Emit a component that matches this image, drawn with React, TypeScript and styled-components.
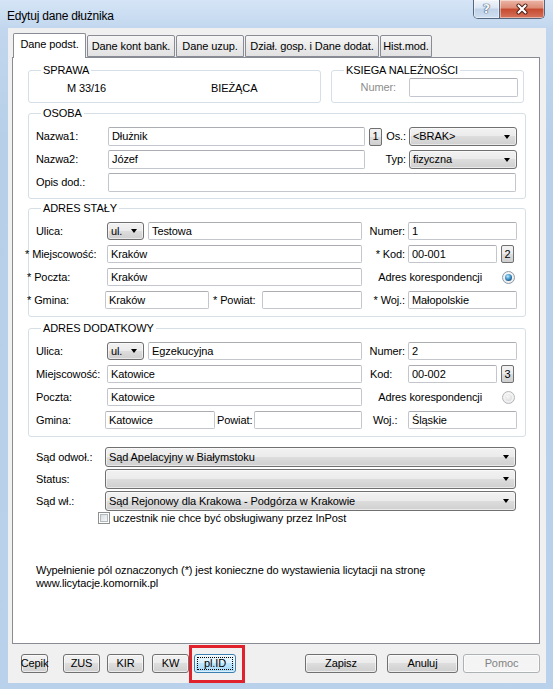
import React from "react";
import styled, { createGlobalStyle } from "styled-components";

const FONT = `"Liberation Sans", Arial, sans-serif`;

const GlobalStyle = createGlobalStyle`
  html, body { margin: 0; padding: 0; background: #ffffff; }
  body { font-family: ${FONT}; font-size: 11px; color: #000; }
  *, *::before, *::after { box-sizing: border-box; }
`;

const Window = styled.div`
  width: 553px;
  height: 689px;
  display: flex;
  flex-direction: column;
  padding: 0 7px 6px 8px;
  background: linear-gradient(180deg, #d5e5f6 0px, #c2d7ee 28px, #b7cfe9 140px, #b9d1ea 100%);
  font-family: ${FONT};
  font-size: 11px;
  letter-spacing: -0.1px;
  overflow: hidden;
`;

const TitleBar = styled.div`
  flex: none;
  height: 28px;
  display: flex;
  align-items: flex-start;
`;

const TitleText = styled.div`
  margin: 9px 0 0 -1px;
  font-size: 12px;
  line-height: 14px;
  letter-spacing: -0.2px;
  color: #000;
`;

const CaptionGroup = styled.div`
  margin-left: auto;
  margin-right: 1px;
  display: flex;
  height: 19px;
  border: 1px solid #55677d;
  border-top: none;
  border-radius: 0 0 5px 5px;
  overflow: hidden;
`;

const CaptionBtn = styled.div<{ $kind: "help" | "close" }>`
  height: 100%;
  width: ${(p) => (p.$kind === "help" ? 25 : 45)}px;
  display: flex;
  align-items: center;
  justify-content: center;
  background: ${(p) =>
    p.$kind === "help"
      ? "linear-gradient(180deg, #f1f5fb 0%, #dbe6f3 45%, #bfd1e7 50%, #cfdff1 100%)"
      : "linear-gradient(180deg, #ecb6a7 0%, #dc8b75 45%, #c54a2f 50%, #d6735b 100%)"};
  box-shadow: inset 0 0 0 1px rgba(255, 255, 255, 0.45);
  & + & {
    border-left: 1px solid #55677d;
  }
`;

const HelpGlyph = styled.span`
  font-family: "DejaVu Sans", sans-serif;
  font-size: 13px;
  font-weight: bold;
  line-height: 14px;
  color: #f3f6fa;
  text-shadow: 0 0 1px #3d5573, 0 0 1px #3d5573, 0 0 1px #3d5573;
`;

const Client = styled.div`
  flex: 1;
  display: flex;
  flex-direction: column;
  background: #f0f0f0;
  padding: 5px 6px 0 4px;
`;

const TabStrip = styled.div`
  flex: none;
  height: 24px;
  display: flex;
  align-items: flex-end;
  gap: 1px;
  padding-left: 1px;
`;

const Tab = styled.div<{ $active?: boolean; $w: number }>`
  position: relative;
  z-index: ${(p) => (p.$active ? 2 : 0)};
  width: ${(p) => p.$w}px;
  height: ${(p) => (p.$active ? 25 : 22)}px;
  margin-bottom: ${(p) => (p.$active ? -1 : 0)}px;
  padding-bottom: ${(p) => (p.$active ? 3 : 0)}px;
  border: 1px solid #898c95;
  border-bottom: ${(p) => (p.$active ? "none" : "1px solid #898c95")};
  border-radius: 2px 2px 0 0;
  background: ${(p) => (p.$active ? "#ffffff" : "linear-gradient(180deg, #f6f6f6 0%, #ebebeb 50%, #e2e2e2 100%)")};
  display: flex;
  align-items: center;
  justify-content: center;
  white-space: nowrap;
  line-height: 13px;
`;

const Panel = styled.div`
  flex: none;
  height: 587px;
  background: #ffffff;
  border: 1px solid #898c95;
  padding: 6px 13px 0 15px;
  display: flex;
  flex-direction: column;
`;

const TopRow = styled.div`
  display: flex;
  gap: 10px;
`;

const Group = styled.fieldset<{ $w?: number; $mt?: number; $pr?: number; $pt?: number; $pb?: number }>`
  margin: ${(p) => p.$mt ?? 0}px 0 0 0;
  padding: ${(p) => p.$pt ?? 7}px ${(p) => p.$pr ?? 8}px ${(p) => p.$pb ?? 7}px 7px;
  border: 1px solid #d5dfe5;
  border-radius: 3px;
  min-width: 0;
  flex: none;
  ${(p) => (p.$w ? `width: ${p.$w}px;` : "")}
`;

const Legend = styled.legend`
  padding: 0 2px;
  margin-left: 5px;
  font-size: 11px;
  line-height: 13px;
  color: #000;
`;

const SprawaRow = styled.div`
  height: 19px;
  display: grid;
  grid-template-columns: 144px auto;
  align-items: center;
  padding-left: 31px;
`;

const KsiegaRow = styled.div`
  height: 19px;
  display: flex;
  align-items: center;
  justify-content: flex-end;
  gap: 13px;
`;

const Rows = styled.div<{ $gap: number }>`
  display: flex;
  flex-direction: column;
  gap: ${(p) => p.$gap}px;
`;

const FlexRow = styled.div<{ $h: number }>`
  height: ${(p) => p.$h}px;
  display: flex;
  align-items: center;
`;

const AddrRow = styled.div`
  height: 18px;
  display: grid;
  grid-template-columns: 71px 255px 46px 109px;
  align-items: center;
`;

const Cell = styled.div<{ $span?: string; $end?: boolean }>`
  display: flex;
  align-items: center;
  height: 100%;
  min-width: 0;
  ${(p) => (p.$span ? `grid-column: ${p.$span};` : "")}
  ${(p) => (p.$end ? "justify-content: flex-end; gap: 20px; padding-right: 2px;" : "")}
`;

const Label = styled.span<{
  $w?: number;
  $align?: "left" | "right";
  $shift?: number;
  $pad?: number;
  $muted?: boolean;
  $flex?: boolean;
}>`
  flex: ${(p) => (p.$flex ? "1 1 auto" : "none")};
  ${(p) => (p.$w ? `width: ${p.$w}px;` : "")}
  text-align: ${(p) => p.$align ?? "left"};
  margin-left: ${(p) => p.$shift ?? 0}px;
  ${(p) =>
    p.$align === "right" ? `padding-right: ${p.$pad ?? 3}px;` : `padding-left: ${p.$pad ?? 0}px;`}
  color: ${(p) => (p.$muted ? "#8d8d8d" : "#000")};
  white-space: nowrap;
  line-height: 13px;
`;

const TextBox = styled.div<{ $w?: number; $ml?: number; $mr?: number; $h?: number }>`
  flex: ${(p) => (p.$w ? "none" : "1 1 0")};
  ${(p) => (p.$w ? `width: ${p.$w}px;` : "")}
  min-width: 0;
  margin-left: ${(p) => p.$ml ?? 0}px;
  margin-right: ${(p) => p.$mr ?? 0}px;
  height: ${(p) => p.$h ?? 18}px;
  border: 1px solid #c3c7cd;
  border-top-color: #abadb3;
  border-radius: 2px;
  background: #ffffff;
  padding: 0 3px;
  display: flex;
  align-items: center;
  white-space: nowrap;
  overflow: hidden;
  line-height: 13px;
`;

const Combo = styled.div<{ $w: number; $h: number; $ml?: number }>`
  position: relative;
  flex: none;
  width: ${(p) => p.$w}px;
  height: ${(p) => p.$h}px;
  margin-left: ${(p) => p.$ml ?? 0}px;
  border: 1px solid #707070;
  border-radius: 3px;
  background: linear-gradient(180deg, #f2f2f2 0%, #ebebeb 50%, #dddddd 50%, #cfcfcf 100%);
  box-shadow: inset 0 0 0 1px rgba(255, 255, 255, 0.55);
  display: flex;
  align-items: center;
  padding: 0 16px 0 3px;
  white-space: nowrap;
  overflow: hidden;
  line-height: 13px;
  &::after {
    content: "";
    position: absolute;
    right: 6px;
    top: 50%;
    margin-top: -2px;
    border-left: 3.5px solid transparent;
    border-right: 3.5px solid transparent;
    border-top: 4px solid #000;
  }
`;

const SmallBtn = styled.div<{ $ml?: number }>`
  flex: none;
  width: 13px;
  height: 18px;
  margin-left: ${(p) => p.$ml ?? 0}px;
  border: 1px solid #707070;
  border-radius: 2px;
  background: linear-gradient(180deg, #f2f2f2 0%, #ebebeb 50%, #dddddd 50%, #cfcfcf 100%);
  display: flex;
  align-items: center;
  justify-content: center;
  line-height: 13px;
`;

const Radio = styled.span<{ $on?: boolean }>`
  position: relative;
  flex: none;
  width: 13px;
  height: 13px;
  border-radius: 50%;
  border: 1px solid ${(p) => (p.$on ? "#8a9aa8" : "#b2b5b8")};
  background: radial-gradient(circle at 50% 40%, #ffffff 0%, #e6e6e6 100%);
  &::after {
    content: "";
    position: absolute;
    inset: 2px;
    border-radius: 50%;
    background: ${(p) =>
      p.$on
        ? "radial-gradient(circle at 40% 35%, #c9ecfd 0%, #5fb0e0 30%, #1f5f92 70%, #123f66 100%)"
        : "radial-gradient(circle at 40% 35%, #f8f8f8 0%, #d6d6d6 100%)"};
  }
`;

const SadBlock = styled.div`
  margin-top: 10px;
  padding-left: 8px;
  display: flex;
  flex-direction: column;
  gap: 2px;
`;

const CheckRow = styled.div`
  margin-top: 1px;
  height: 12px;
  display: flex;
  align-items: center;
  padding-left: 70px;
  gap: 3px;
`;

const CheckBox = styled.span`
  position: relative;
  flex: none;
  width: 12px;
  height: 12px;
  border: 1px solid #8e8f8f;
  background: #ffffff;
  &::after {
    content: "";
    position: absolute;
    inset: 1px;
    border: 1px solid #b4b9be;
    background: linear-gradient(135deg, #d9dcdf 0%, #f7f7f7 100%);
  }
`;

const Info = styled.div`
  margin-top: 40px;
  padding-left: 8px;
  line-height: 13px;
`;

const BottomBar = styled.div`
  flex: none;
  margin-top: 10px;
  height: 19px;
  display: flex;
  align-items: stretch;
`;

const Btn = styled.div<{ $w: number; $ml?: number | "auto"; $variant?: "normal" | "focus" | "disabled" }>`
  position: relative;
  flex: none;
  width: ${(p) => p.$w}px;
  margin-left: ${(p) => (p.$ml === "auto" ? "auto" : `${p.$ml ?? 0}px`)};
  border: 1px solid
    ${(p) => (p.$variant === "focus" ? "#3c7fb1" : p.$variant === "disabled" ? "#adb2b5" : "#707070")};
  border-radius: 3px;
  background: ${(p) =>
    p.$variant === "focus"
      ? "linear-gradient(180deg, #eaf6fd 0%, #d9f0fc 50%, #bee6fd 50%, #a7d9f5 100%)"
      : p.$variant === "disabled"
      ? "#f4f4f4"
      : "linear-gradient(180deg, #f2f2f2 0%, #ebebeb 50%, #dddddd 50%, #cfcfcf 100%)"};
  box-shadow: inset 0 0 0 1px rgba(255, 255, 255, 0.6);
  color: ${(p) => (p.$variant === "disabled" ? "#838383" : "#000")};
  display: flex;
  align-items: center;
  justify-content: center;
  line-height: 13px;
  white-space: nowrap;
  ${(p) =>
    p.$variant === "focus"
      ? `
    outline: 1px dotted #000;
    outline-offset: -4px;
  `
      : ""}
`;

const Highlight = styled.div`
  position: absolute;
  left: -6px;
  right: -10px;
  top: -10px;
  bottom: -11px;
  border: 3px solid #e0222c;
  pointer-events: none;
`;

const tabs = [
  { label: "Dane podst.", w: 73, active: true },
  { label: "Dane kont bank.", w: 88 },
  { label: "Dane uzup.", w: 68 },
  { label: "Dział. gosp. i Dane dodat.", w: 134 },
  { label: "Hist.mod.", w: 52 },
];

function CloseIcon() {
  return (
    <svg width="14" height="12" viewBox="0 0 14 12">
      <path d="M3.5 2.5 L10.5 9.5 M10.5 2.5 L3.5 9.5" stroke="#4a1b12" strokeWidth="4" strokeLinecap="round" />
      <path d="M3.5 2.5 L10.5 9.5 M10.5 2.5 L3.5 9.5" stroke="#ffffff" strokeWidth="2.2" strokeLinecap="round" />
    </svg>
  );
}

export default function App() {
  return (
    <>
      <GlobalStyle />
      <Window>
        <TitleBar>
          <TitleText>Edytuj dane dłużnika</TitleText>
          <CaptionGroup>
            <CaptionBtn $kind="help">
              <HelpGlyph>?</HelpGlyph>
            </CaptionBtn>
            <CaptionBtn $kind="close">
              <CloseIcon />
            </CaptionBtn>
          </CaptionGroup>
        </TitleBar>
        <Client>
          <TabStrip>
            {tabs.map((t) => (
              <Tab key={t.label} $w={t.w} $active={t.active}>
                {t.label}
              </Tab>
            ))}
          </TabStrip>
          <Panel>
            <TopRow>
              <Group $w={293} $pt={1} $pb={5}>
                <Legend>SPRAWA</Legend>
                <SprawaRow>
                  <span>M 33/16</span>
                  <span>BIEŻĄCA</span>
                </SprawaRow>
              </Group>
              <Group $w={193} $pt={1} $pb={5} $pr={5}>
                <Legend>KSIEGA NALEŻNOŚCI</Legend>
                <KsiegaRow>
                  <Label $muted>Numer:</Label>
                  <TextBox $w={109} $h={19} />
                </KsiegaRow>
              </Group>
            </TopRow>

            <Group $mt={4} $pt={7} $pb={6}>
              <Legend>OSOBA</Legend>
              <Rows $gap={4}>
                <FlexRow $h={19}>
                  <Label $w={72}>Nazwa1:</Label>
                  <TextBox $w={257} $h={19}>Dłużnik</TextBox>
                  <SmallBtn $ml={4}>1</SmallBtn>
                  <Label $flex $align="right" $pad={2}>Os.:</Label>
                  <Combo $w={108} $h={19} $ml={1}>&lt;BRAK&gt;</Combo>
                </FlexRow>
                <FlexRow $h={19}>
                  <Label $w={72}>Nazwa2:</Label>
                  <TextBox $w={257} $h={19}>Józef</TextBox>
                  <Label $flex $align="right" $pad={2}>Typ:</Label>
                  <Combo $w={108} $h={19} $ml={1}>fizyczna</Combo>
                </FlexRow>
                <FlexRow $h={19}>
                  <Label $w={72}>Opis dod.:</Label>
                  <TextBox $h={19} $mr={1} />
                </FlexRow>
              </Rows>
            </Group>

            <Group $mt={3} $pt={7} $pb={7}>
              <Legend>ADRES STAŁY</Legend>
              <Rows $gap={5}>
                <AddrRow>
                  <Label>Ulica:</Label>
                  <Cell>
                    <Combo $w={37} $h={18}>ul.</Combo>
                    <TextBox $ml={4}>Testowa</TextBox>
                  </Cell>
                  <Label $align="right">Numer:</Label>
                  <Cell>
                    <TextBox>1</TextBox>
                  </Cell>
                </AddrRow>
                <AddrRow>
                  <Label $shift={-11}>* Miejscowość:</Label>
                  <Cell>
                    <TextBox>Kraków</TextBox>
                  </Cell>
                  <Label $align="right">* Kod:</Label>
                  <Cell>
                    <TextBox $w={89}>00-001</TextBox>
                    <SmallBtn $ml={4}>2</SmallBtn>
                  </Cell>
                </AddrRow>
                <AddrRow>
                  <Label $shift={-9}>* Poczta:</Label>
                  <Cell>
                    <TextBox>Kraków</TextBox>
                  </Cell>
                  <Cell $span="3 / 5" $end>
                    <Label>Adres korespondencji</Label>
                    <Radio $on />
                  </Cell>
                </AddrRow>
                <AddrRow>
                  <Label $shift={-9}>* Gmina:</Label>
                  <Cell>
                    <TextBox $w={104} $ml={-2}>Kraków</TextBox>
                    <Label $shift={4} $pad={0}>* Powiat:</Label>
                    <TextBox $ml={6} />
                  </Cell>
                  <Label $align="right">* Woj.:</Label>
                  <Cell>
                    <TextBox>Małopolskie</TextBox>
                  </Cell>
                </AddrRow>
              </Rows>
            </Group>

            <Group $mt={5} $pt={7} $pb={7}>
              <Legend>ADRES DODATKOWY</Legend>
              <Rows $gap={5}>
                <AddrRow>
                  <Label>Ulica:</Label>
                  <Cell>
                    <Combo $w={37} $h={18}>ul.</Combo>
                    <TextBox $ml={4}>Egzekucyjna</TextBox>
                  </Cell>
                  <Label $align="right">Numer:</Label>
                  <Cell>
                    <TextBox>2</TextBox>
                  </Cell>
                </AddrRow>
                <AddrRow>
                  <Label>Miejscowość:</Label>
                  <Cell>
                    <TextBox>Katowice</TextBox>
                  </Cell>
                  <Label $pad={8}>Kod:</Label>
                  <Cell>
                    <TextBox $w={89}>00-002</TextBox>
                    <SmallBtn $ml={4}>3</SmallBtn>
                  </Cell>
                </AddrRow>
                <AddrRow>
                  <Label>Poczta:</Label>
                  <Cell>
                    <TextBox>Katowice</TextBox>
                  </Cell>
                  <Cell $span="3 / 5" $end>
                    <Label>Adres korespondencji</Label>
                    <Radio />
                  </Cell>
                </AddrRow>
                <AddrRow>
                  <Label>Gmina:</Label>
                  <Cell>
                    <TextBox $w={110} $ml={-2}>Katowice</TextBox>
                    <Label $shift={2} $pad={0}>Powiat:</Label>
                    <TextBox $ml={2} />
                  </Cell>
                  <Label $pad={11}>Woj.:</Label>
                  <Cell>
                    <TextBox>Śląskie</TextBox>
                  </Cell>
                </AddrRow>
              </Rows>
            </Group>

            <SadBlock>
              <FlexRow $h={20}>
                <Label $w={69}>Sąd odwoł.:</Label>
                <Combo $w={411} $h={20}>Sąd Apelacyjny w Białymstoku</Combo>
              </FlexRow>
              <FlexRow $h={20}>
                <Label $w={69}>Status:</Label>
                <Combo $w={411} $h={20} />
              </FlexRow>
              <FlexRow $h={20}>
                <Label $w={69}>Sąd wł.:</Label>
                <Combo $w={411} $h={20}>Sąd Rejonowy dla Krakowa - Podgórza w Krakowie</Combo>
              </FlexRow>
            </SadBlock>
            <CheckRow>
              <CheckBox />
              <Label>uczestnik nie chce być obsługiwany przez InPost</Label>
            </CheckRow>

            <Info>
              Wypełnienie pól oznaczonych (*) jest konieczne do wystawienia licytacji na stronę
              <br />
              www.licytacje.komornik.pl
            </Info>
          </Panel>

          <BottomBar>
            <Btn $w={27} $ml={9}>Cepik</Btn>
            <Btn $w={37} $ml={15}>ZUS</Btn>
            <Btn $w={37} $ml={7}>KIR</Btn>
            <Btn $w={37} $ml={8}>KW</Btn>
            <Btn $w={42} $ml={5} $variant="focus">
              pl.ID
              <Highlight />
            </Btn>
            <Btn $w={72} $ml="auto">Zapisz</Btn>
            <Btn $w={71} $ml={10}>Anuluj</Btn>
            <Btn $w={77} $ml={5} $variant="disabled">Pomoc</Btn>
          </BottomBar>
        </Client>
      </Window>
    </>
  );
}
